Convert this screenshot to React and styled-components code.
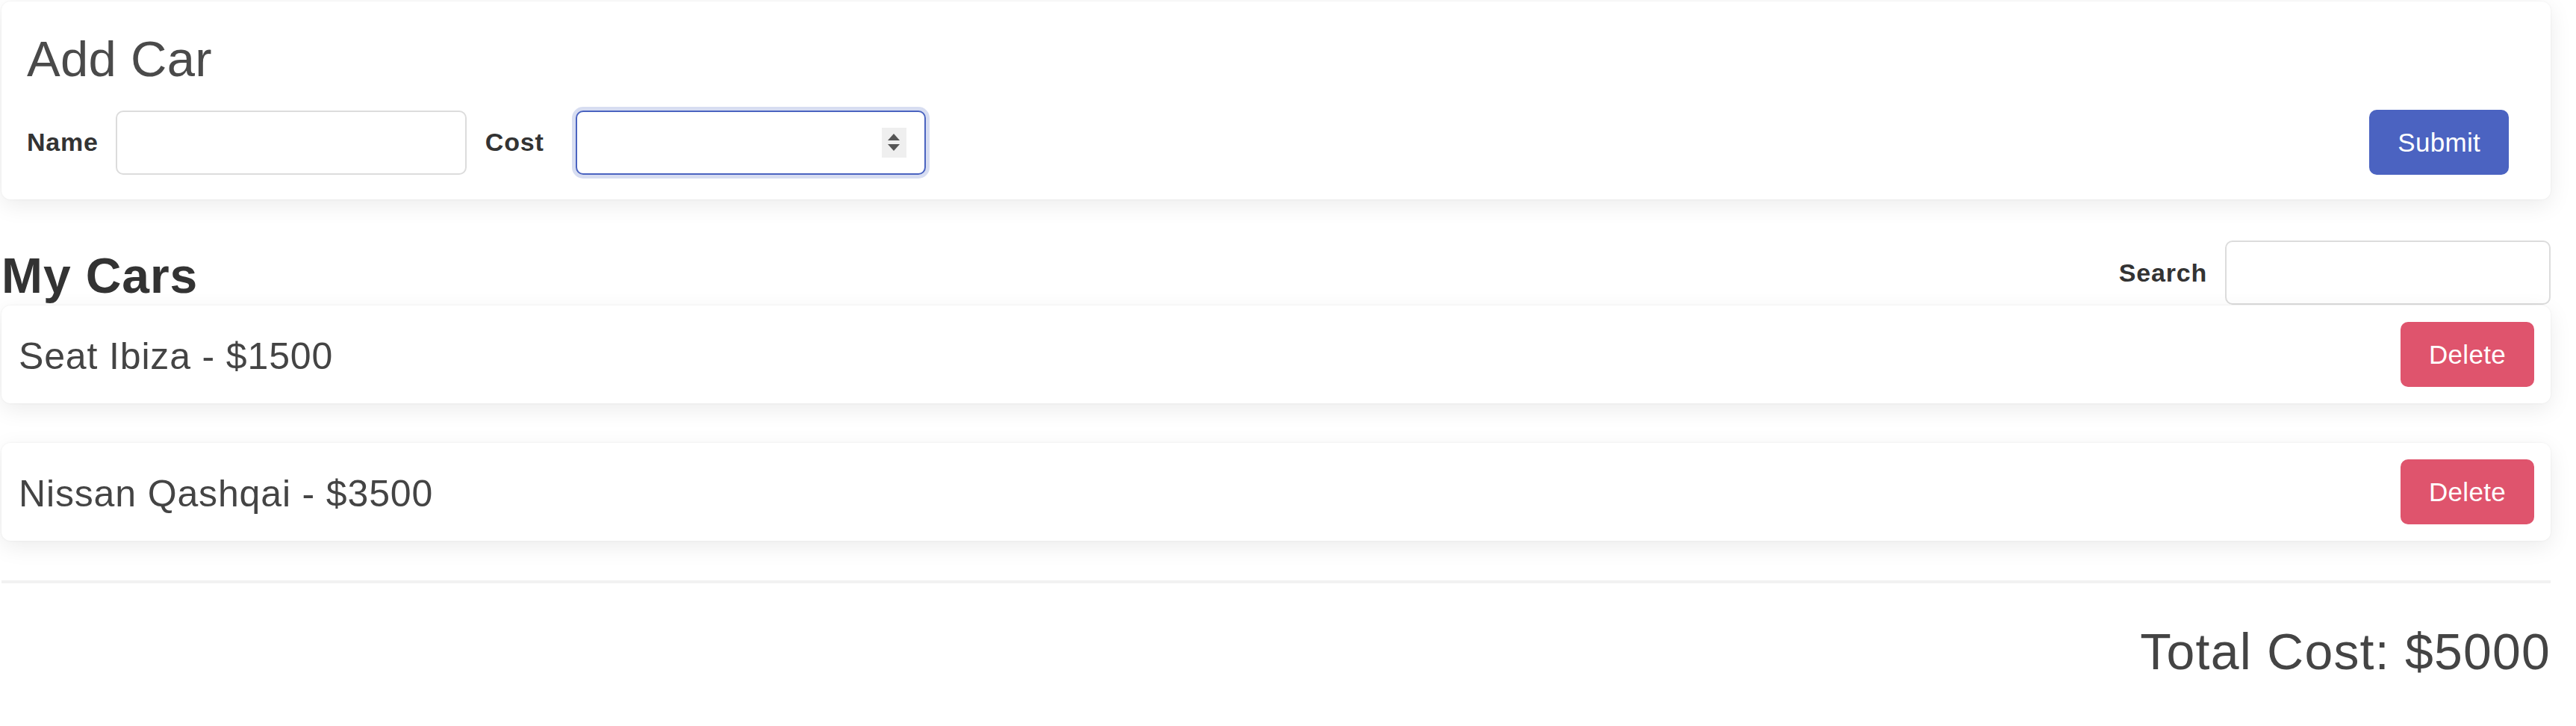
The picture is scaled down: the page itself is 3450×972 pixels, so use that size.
import styled, { createGlobalStyle } from 'styled-components'

const GlobalStyle = createGlobalStyle`
  html, body {
    margin: 0;
    padding: 0;
    background: #fff;
    font-family: "Liberation Sans", Arial, sans-serif;
    color: #444;
  }
  * { box-sizing: border-box; }
`

const Page = styled.div`
  padding: 2px 34px 0 2px;
`

const Card = styled.div`
  background: #fff;
  border-radius: 12px;
  box-shadow: 0 8px 30px rgba(0, 0, 0, 0.08), 0 0 3px rgba(0, 0, 0, 0.06);
`

const FormCard = styled(Card)`
  padding: 37px 56px 33px 34px;
`

const Title = styled.h3`
  margin: 0 0 28px;
  font-size: 67px;
  line-height: 80px;
  font-weight: 400;
  letter-spacing: 0.3px;
  color: #4a4a4a;
`

const FormRow = styled.form`
  display: flex;
  align-items: center;
`

const Label = styled.label`
  font-size: 34px;
  font-weight: 700;
  letter-spacing: 0.8px;
  color: #333;
  margin-right: ${(p) => p.$gap || 23}px;
`

const Input = styled.input`
  width: ${(p) => p.$width || 470}px;
  height: 86px;
  border: 2px solid ${(p) => (p.$focused ? '#4a63c0' : '#dcdcdc')};
  border-radius: 10px;
  font-size: 36px;
  padding: 0 22px;
  outline: none;
  background: #fff;
  box-shadow: ${(p) => (p.$focused ? '0 0 0 5px rgba(74, 99, 192, 0.22)' : 'none')};
  margin-right: ${(p) => p.$after || 0}px;
`

const NumberWrap = styled.div`
  position: relative;
`

const Spinner = styled.span`
  position: absolute;
  right: 26px;
  top: 23px;
  width: 33px;
  height: 40px;
  background: #efefef;
  display: flex;
  flex-direction: column;
  align-items: center;
  justify-content: center;
  gap: 5px;
  &::before, &::after {
    content: '';
    width: 0;
    height: 0;
    border-left: 8px solid transparent;
    border-right: 8px solid transparent;
  }
  &::before { border-bottom: 9px solid #555; }
  &::after { border-top: 9px solid #555; }
`

const Spacer = styled.div`
  flex: 1;
`

const Button = styled.button`
  height: 87px;
  padding: 0 38px;
  border: none;
  border-radius: 10px;
  font-family: inherit;
  font-size: 35px;
  letter-spacing: 0.3px;
  color: #fff;
  background: ${(p) => (p.$variant === 'danger' ? '#df546d' : '#4b63c1')};
  cursor: pointer;
`

const ListHeader = styled.div`
  display: flex;
  justify-content: space-between;
  align-items: flex-end;
  margin-top: 55px;
  margin-bottom: 1px;
`

const ListTitle = styled.h2`
  margin: 0;
  font-size: 66px;
  line-height: 80px;
  font-weight: 700;
  letter-spacing: 0.9px;
  color: #333;
  position: relative;
  top: 1px;
`

const SearchGroup = styled.div`
  display: flex;
  align-items: center;
`

const CarList = styled.div`
  display: flex;
  flex-direction: column;
  gap: 53px;
`

const CarRow = styled(Card)`
  height: 131px;
  padding: 0 22px 0 23px;
  display: flex;
  align-items: center;
  justify-content: space-between;
`

const CarName = styled.span`
  font-size: 50px;
  letter-spacing: 0.85px;
  color: #444;
  position: relative;
  top: 2px;
`

const Divider = styled.hr`
  margin: 53px 0 0;
  border: none;
  height: 4px;
  background: #f2f2f2;
`

const Total = styled.div`
  margin-top: 50px;
  text-align: right;
  font-size: 68px;
  line-height: 82px;
  letter-spacing: 1.2px;
  color: #444;
`

const cars = [
  { id: 1, name: 'Seat Ibiza', cost: 1500 },
  { id: 2, name: 'Nissan Qashqai', cost: 3500 },
]

const App = () => {
  const total = cars.reduce((sum, c) => sum + c.cost, 0)
  return (
    <>
      <GlobalStyle />
      <Page>
        <FormCard>
          <Title>Add Car</Title>
          <FormRow onSubmit={(e) => e.preventDefault()}>
            <Label htmlFor="name">Name</Label>
            <Input id="name" type="text" $after={25} />
            <Label htmlFor="cost" $gap={42}>Cost</Label>
            <NumberWrap>
              <Input id="cost" type="text" inputMode="numeric" $width={469} $focused />
              <Spinner aria-hidden="true" />
            </NumberWrap>
            <Spacer />
            <Button type="submit">Submit</Button>
          </FormRow>
        </FormCard>

        <ListHeader>
          <ListTitle>My Cars</ListTitle>
          <SearchGroup>
            <Label htmlFor="search" $gap={24}>Search</Label>
            <Input id="search" type="text" $width={436} />
          </SearchGroup>
        </ListHeader>

        <CarList>
          {cars.map((car) => (
            <CarRow key={car.id}>
              <CarName>{car.name} - ${car.cost}</CarName>
              <Button $variant="danger">Delete</Button>
            </CarRow>
          ))}
        </CarList>

        <Divider />
        <Total>Total Cost: ${total}</Total>
      </Page>
    </>
  )
}

export default App
